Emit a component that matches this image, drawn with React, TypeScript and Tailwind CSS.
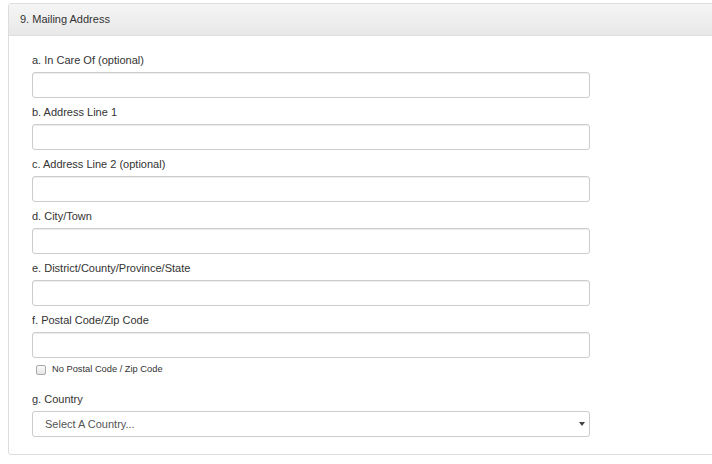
import { ChangeEvent, useState } from 'react';

const FIELDS = [
  { id: 'careOf', label: 'a. In Care Of (optional)' },
  { id: 'line1', label: 'b. Address Line 1' },
  { id: 'line2', label: 'c. Address Line 2 (optional)' },
  { id: 'city', label: 'd. City/Town' },
  { id: 'state', label: 'e. District/County/Province/State' },
  { id: 'postal', label: 'f. Postal Code/Zip Code' },
];

const inputClass =
  'block w-[558px] h-[26px] px-3 text-[11px] text-[#555] bg-white border border-[#ccc] rounded-[3px] shadow-[inset_0_1px_1px_rgba(0,0,0,0.075)] outline-none';

export default function App() {
  const [values, setValues] = useState<Record<string, string>>({});
  const [noPostal, setNoPostal] = useState(false);

  const update = (id: string) => (e: ChangeEvent<HTMLInputElement>) =>
    setValues((v) => ({ ...v, [id]: e.target.value }));

  return (
    <div className="w-[712px] h-[464px] overflow-hidden bg-white font-['Liberation_Sans',Arial,sans-serif] text-[#333]">
      <section className="mt-[3px] ml-[8px] w-[720px] border border-[#ddd] rounded-[3px]">
        {/* 헤더 */}
        <header className="h-[32px] flex items-center pl-[11px] text-[11px] text-[#333] bg-gradient-to-b from-[#f5f5f5] to-[#e8e8e8] border-b border-[#ddd]">
          9. Mailing Address
        </header>

        <form className="pt-[16px] pb-[17px] pl-[23px]">
          {FIELDS.map((f) => (
            <div key={f.id} className="mb-[6px]">
              <label htmlFor={f.id} className="block h-[16px] leading-[16px] text-[11px] mb-[4px]">
                {f.label}
              </label>
              <input
                id={f.id}
                type="text"
                className={inputClass}
                value={values[f.id] ?? ''}
                onChange={update(f.id)}
              />
            </div>
          ))}

          {/* 우편번호 없음 */}
          <label className="flex items-center h-[12px] pl-[4px] gap-[6px] text-[9.3px] text-[#333] mb-[15px]">
            <input
              type="checkbox"
              checked={noPostal}
              onChange={(e) => setNoPostal(e.target.checked)}
              className="w-[10px] h-[10px] m-0 appearance-none border border-[#aaa] rounded-[2px] bg-gradient-to-b from-[#fafafa] to-[#e6e6e6]"
            />
            No Postal Code / Zip Code
          </label>

          <label htmlFor="country" className="block h-[16px] leading-[16px] text-[11px] mb-[4px]">
            g. Country
          </label>
          <div className="relative w-[558px]">
            <select
              id="country"
              className="block w-full h-[26px] pl-[12px] text-[11px] text-[#555] bg-white border border-[#ccc] rounded-[3px] appearance-none outline-none"
              defaultValue=""
            >
              <option value="">Select A Country...</option>
            </select>
            <span className="absolute right-[5px] top-[11px] w-0 h-0 border-l-[3px] border-r-[3px] border-t-[4px] border-l-transparent border-r-transparent border-t-[#444]" />
          </div>
        </form>
      </section>
    </div>
  );
}
